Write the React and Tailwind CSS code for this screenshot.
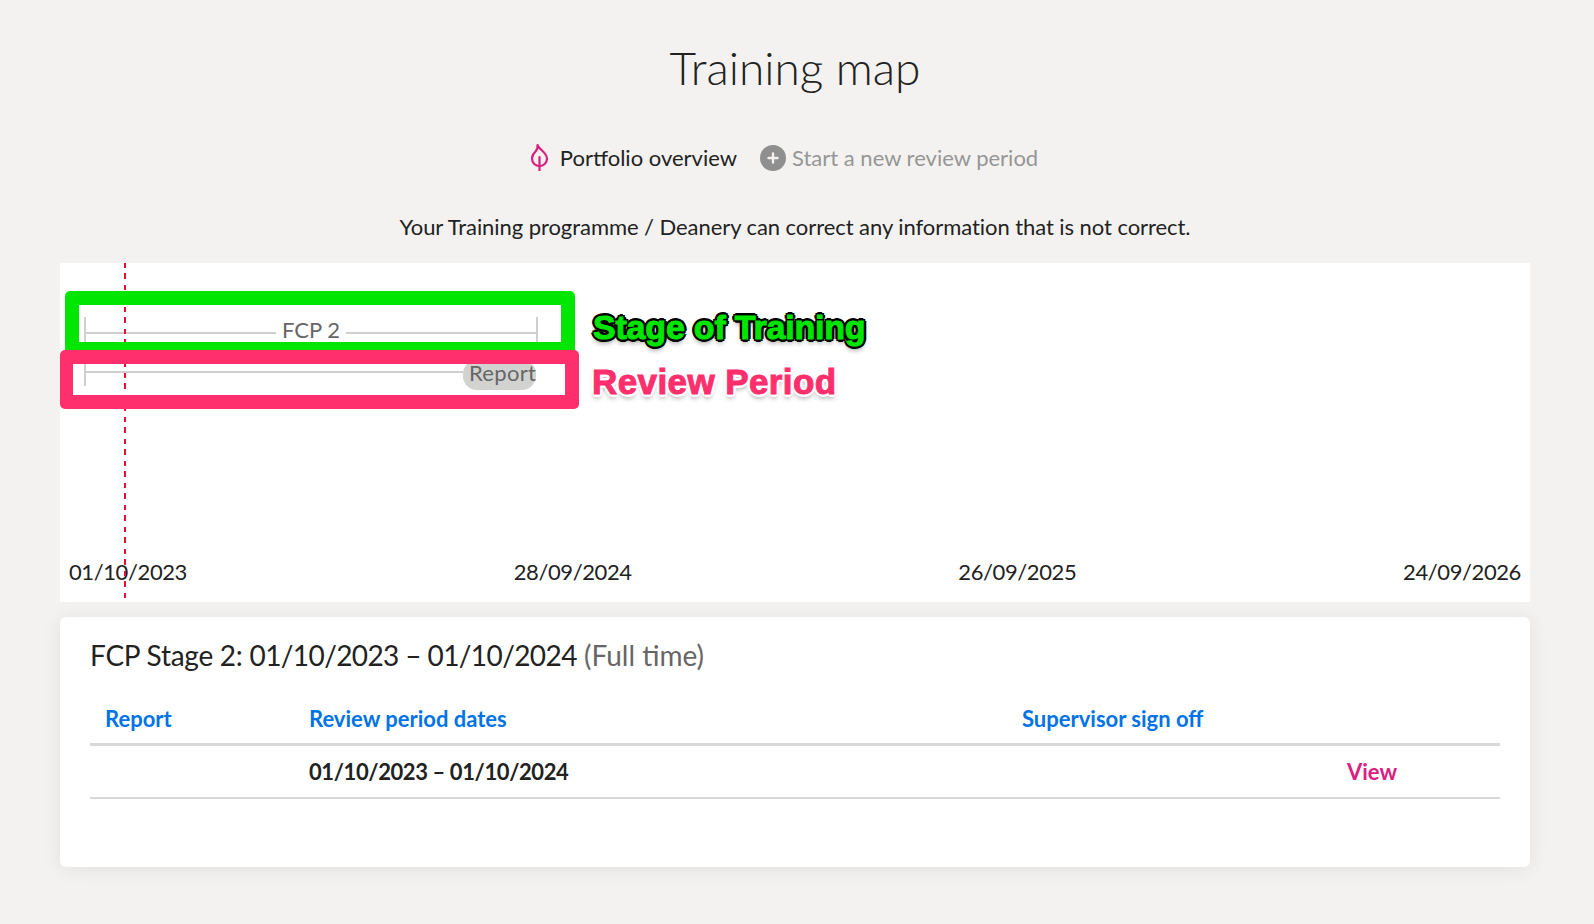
import React from "react";

const font = { fontFamily: "Lato, sans-serif" };
const labelFont = { fontFamily: "'Liberation Sans', sans-serif" };

const LeafIcon = () => (
  <svg width="19" height="28" viewBox="0 0 19 28" fill="none" stroke="#d9207f" strokeWidth="2.2" strokeLinejoin="round">
    <path d="M7.5 2c.5 3.5 9.500 7.500 9.500 13.500 0 4.500-3.500 7.500-7.500 7.500s-7.500-3-7.500-7.500c0-3.500 2-5.500 3.500-7 1.500-1.500 2.500-3.500 2-6.500z" />
    <path d="M9.500 14v13.500" strokeLinecap="round" />
  </svg>
);

const PlusIcon = () => (
  <span className="mt-[1px] flex h-[26px] w-[26px] items-center justify-center rounded-full bg-[#8f8f8f]">
    <svg width="12" height="12" viewBox="0 0 12 12" stroke="#f3f2f0" strokeWidth="2.4" strokeLinecap="round">
      <path d="M6 1.500v9M1.500 6h9" />
    </svg>
  </span>
);

export default function App() {
  return (
    <div className="min-h-[924px] bg-[#f3f2f0] pl-[60px] pr-[64px] text-[#222]" style={font}>
      <h1 className="pt-[35px] text-center text-[46px] leading-[66px] font-light">Training map</h1>

      <div className="mt-[30px] flex h-[52px] items-center justify-center pr-[22px] text-[22px]">
        <LeafIcon />
        <span className="ml-[11px]">Portfolio overview</span>
        <span className="ml-[23px]"><PlusIcon /></span>
        <span className="ml-[6px] text-[#969696]">Start a new review period</span>
      </div>

      <p className="mt-[29px] text-center text-[22px] leading-[30px] tracking-[-0.06px]">
        Your Training programme / Deanery can correct any information that is not correct.
      </p>

      {/* timeline */}
      <div className="relative mt-[21px] flex h-[339px] flex-col bg-white px-[9px]">
        <div className="ml-[15px] mt-[54px] flex h-[32px] w-[454px] items-center border-x-2 border-[#cfcfcf] text-[#666]">
          <div className="h-[2px] flex-1 bg-[#cfcfcf]" />
          <span className="mb-[6px] px-[6px] text-[22px] leading-[30px]">FCP 2</span>
          <div className="h-[2px] flex-1 bg-[#cfcfcf]" />
        </div>
        <div className="ml-[15px] mt-[15px] flex h-[22px] w-[452px] border-l-2 border-[#cfcfcf] text-[#666]">
          <div className="mt-[7px] h-[2px] flex-1 bg-[#cfcfcf]" />
          <span className="-mt-[4px] h-[30px] w-[73px] rounded-[14px] bg-[#d2d2d0] pl-[6px] text-left text-[22px] leading-[25px] tracking-[0.3px] whitespace-nowrap">Report</span>
        </div>

        <div className="mt-auto mb-[15px] flex justify-between text-[22px] leading-[30px] tracking-[-0.4px]">
          <span>01/10/2023</span>
          <span>28/09/2024</span>
          <span>26/09/2025</span>
          <span>24/09/2026</span>
        </div>

        {/* today marker */}
        <div className="absolute bottom-0 left-[64px] top-0 w-[2px] bg-[repeating-linear-gradient(to_bottom,#e8102c_0,#e8102c_5px,transparent_5px,transparent_10px,#e8102c_10px,#e8102c_16px,transparent_16px,transparent_22px)]" />

        {/* screenshot annotations */}
        <div className="absolute left-[5px] top-[28px] h-[65px] w-[510px] rounded-[5px] border-[14px] border-[#00e600]" />
        <div className="absolute left-0 top-[87px] h-[59px] w-[519px] rounded-[5px] border-[14px] border-l-[13px] border-[#ff2e6c]" />
        <span
          className="absolute left-[533px] top-[42px] text-[34px] leading-[44px] font-bold tracking-[-0.2px] text-[#00e600] [-webkit-text-stroke:1px_#00e600] [text-shadow:3px_0_#000,-3px_0_#000,0_3px_#000,0_-3px_#000,2px_2px_#000,-2px_2px_#000,2px_-2px_#000,-2px_-2px_#000,0_4px_5px_rgba(0,0,0,0.45)]"
          style={labelFont}
        >
          Stage of Training
        </span>
        <span
          className="absolute left-[532px] top-[97px] text-[35px] leading-[44px] font-bold tracking-[0.4px] text-[#ff2e6c] [-webkit-text-stroke:1px_#ff2e6c] [text-shadow:3px_0_#fff,-3px_0_#fff,0_3px_#fff,0_-3px_#fff,2px_2px_#fff,-2px_2px_#fff,2px_-2px_#fff,-2px_-2px_#fff,0_4px_5px_rgba(0,0,0,0.4)]"
          style={labelFont}
        >
          Review Period
        </span>
      </div>

      {/* stage card */}
      <div className="mt-[15px] h-[250px] rounded-[6px] bg-white px-[30px] pt-[19px] shadow-[0_2px_20px_rgba(0,0,0,0.07)]">
        <h2 className="text-[28px] leading-[38px]">
          <span className="tracking-[-0.25px]">FCP Stage 2: </span><span className="tracking-[-0.6px]">01/10/2023 – 01/10/2024</span> <span className="text-[#666]">(Full time)</span>
        </h2>
        <div className="mt-[22px] grid h-[50px] grid-cols-[204px_713px_325px_1fr] items-center border-b-[3px] border-[#d8d8d8] px-[15px] pb-[2px] text-[22px] font-bold text-[#0073e6]">
          <span>Report</span>
          <span>Review period dates</span>
          <span>Supervisor sign off</span>
          <span />
        </div>
        <div className="grid h-[53px] grid-cols-[204px_713px_325px_1fr] items-center border-b-2 border-[#d8d8d8] px-[15px] text-[22px] font-bold">
          <span />
          <span className="tracking-[-0.4px]">01/10/2023 – 01/10/2024</span>
          <span />
          <span className="text-[#d9207f]">View</span>
        </div>
      </div>
    </div>
  );
}
